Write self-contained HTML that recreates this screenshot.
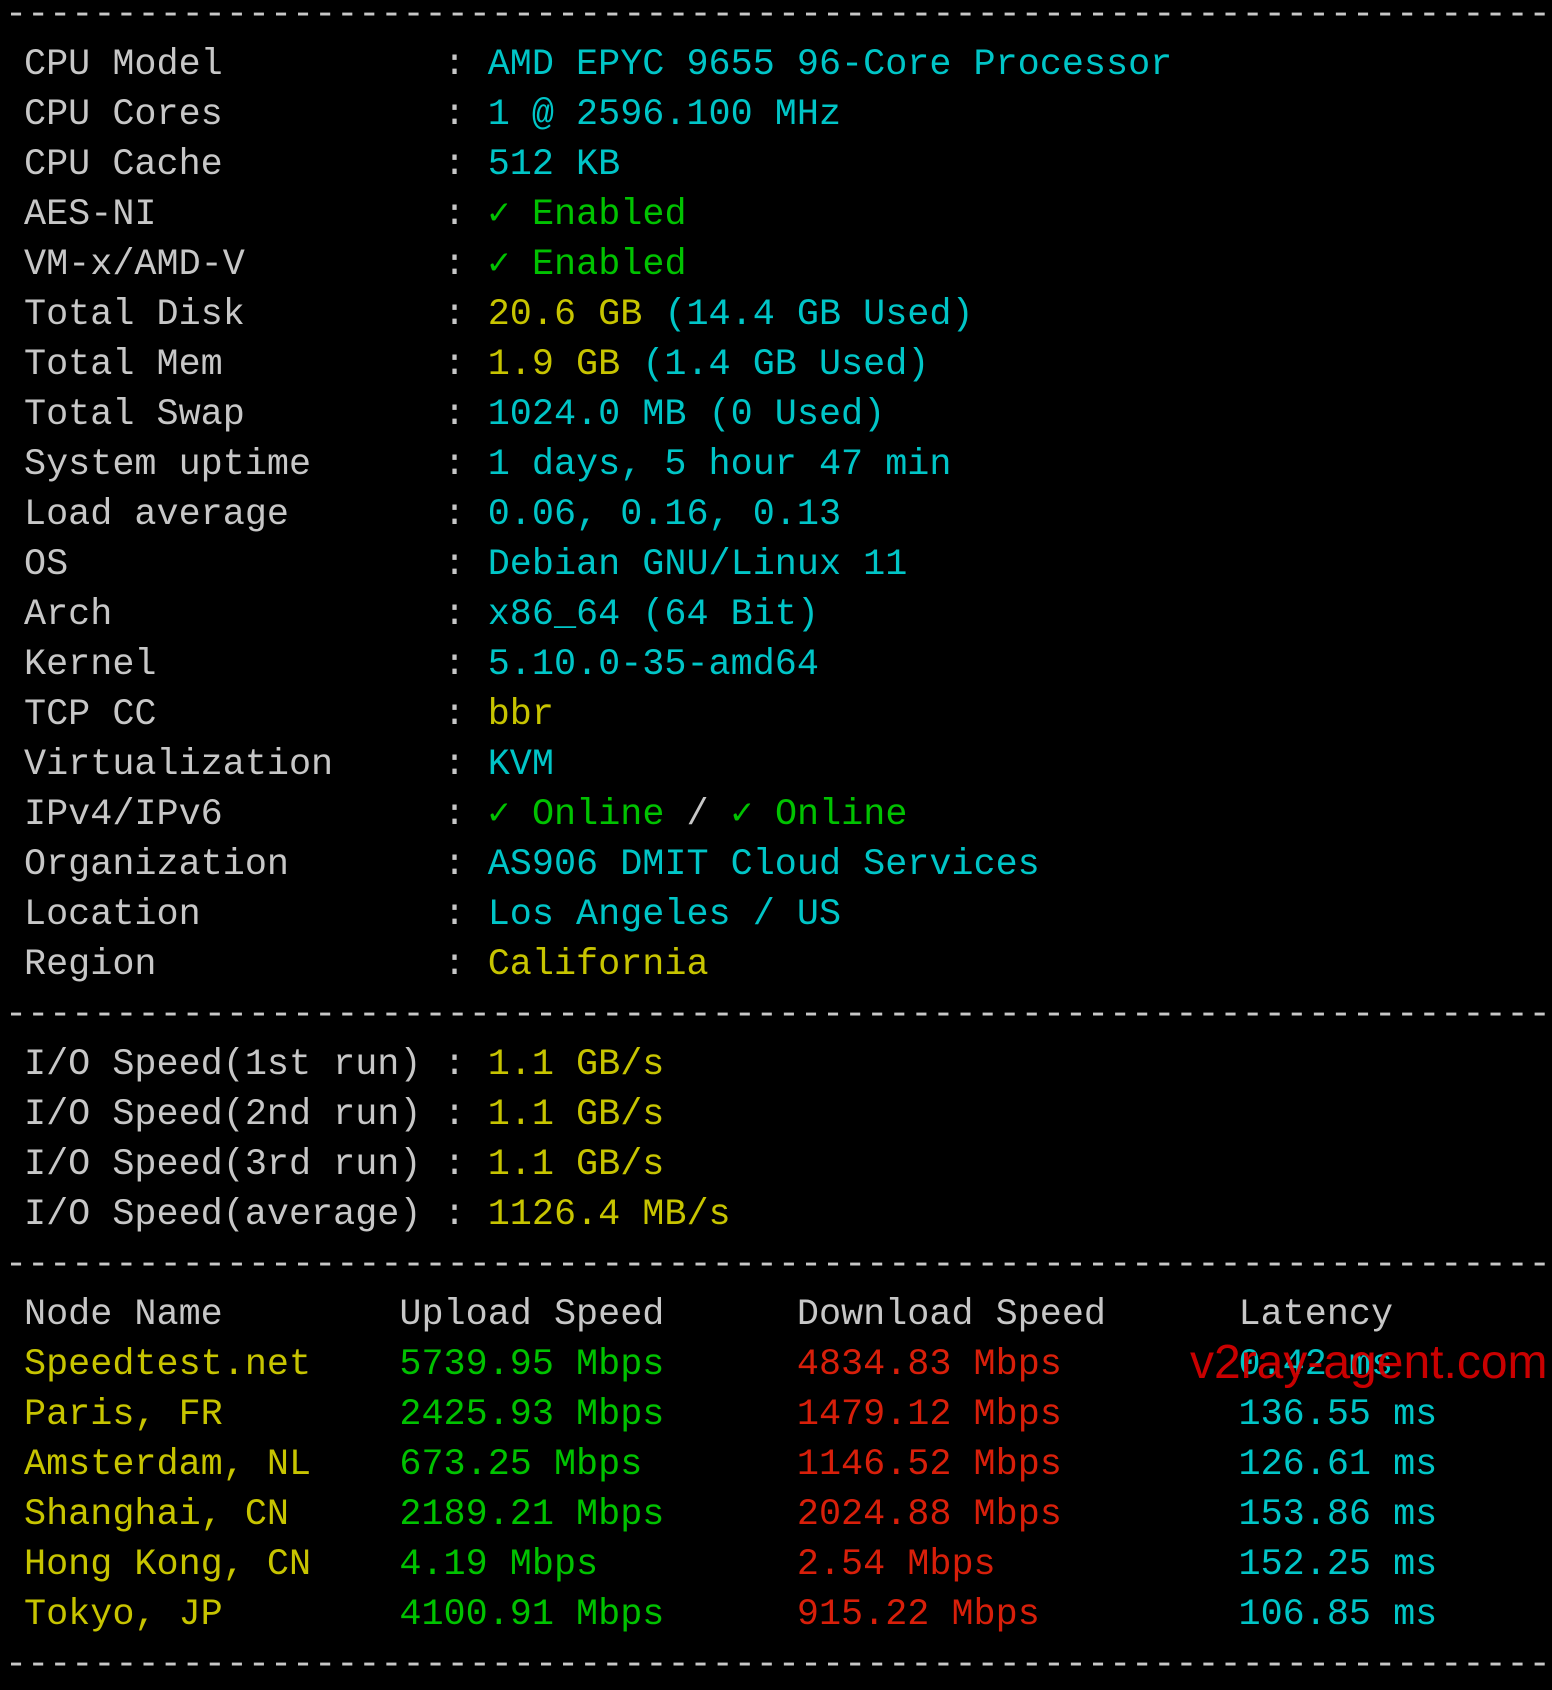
<!DOCTYPE html>
<html><head><meta charset="utf-8"><style>
html,body{margin:0;padding:0;background:#000;width:1552px;height:1680px;overflow:hidden}
pre{position:absolute;left:24px;top:-10px;margin:0;font-family:"Liberation Mono","DejaVu Sans Mono",monospace;font-size:36.8px;line-height:50px;color:#c7c7c7;white-space:pre}
.d{display:inline-block;margin-left:-19px}
.c{color:#00c5c7}.g{color:#00c200}.y{color:#c7c400}.r{color:#d81f0a}
.wm{position:absolute;left:1190px;top:1335px;font-family:"Liberation Sans",Arial,sans-serif;font-size:48px;color:#d40000;line-height:56px;opacity:.95}
</style></head><body>
<pre><span class="d">----------------------------------------------------------------------</span>
CPU Model          : <span class="c">AMD EPYC 9655 96-Core Processor</span>
CPU Cores          : <span class="c">1 @ 2596.100 MHz</span>
CPU Cache          : <span class="c">512 KB</span>
AES-NI             : <span class="g">✓ Enabled</span>
VM-x/AMD-V         : <span class="g">✓ Enabled</span>
Total Disk         : <span class="y">20.6 GB</span> <span class="c">(14.4 GB Used)</span>
Total Mem          : <span class="y">1.9 GB</span> <span class="c">(1.4 GB Used)</span>
Total Swap         : <span class="c">1024.0 MB (0 Used)</span>
System uptime      : <span class="c">1 days, 5 hour 47 min</span>
Load average       : <span class="c">0.06, 0.16, 0.13</span>
OS                 : <span class="c">Debian GNU/Linux 11</span>
Arch               : <span class="c">x86_64 (64 Bit)</span>
Kernel             : <span class="c">5.10.0-35-amd64</span>
TCP CC             : <span class="y">bbr</span>
Virtualization     : <span class="c">KVM</span>
IPv4/IPv6          : <span class="g">✓ Online</span> / <span class="g">✓ Online</span>
Organization       : <span class="c">AS906 DMIT Cloud Services</span>
Location           : <span class="c">Los Angeles / US</span>
Region             : <span class="y">California</span>
<span class="d">----------------------------------------------------------------------</span>
I/O Speed(1st run) : <span class="y">1.1 GB/s</span>
I/O Speed(2nd run) : <span class="y">1.1 GB/s</span>
I/O Speed(3rd run) : <span class="y">1.1 GB/s</span>
I/O Speed(average) : <span class="y">1126.4 MB/s</span>
<span class="d">----------------------------------------------------------------------</span>
Node Name        Upload Speed      Download Speed      Latency
<span class="y">Speedtest.net    </span><span class="g">5739.95 Mbps      </span><span class="r">4834.83 Mbps        </span><span class="c">0.42 ms</span>
<span class="y">Paris, FR        </span><span class="g">2425.93 Mbps      </span><span class="r">1479.12 Mbps        </span><span class="c">136.55 ms</span>
<span class="y">Amsterdam, NL    </span><span class="g">673.25 Mbps       </span><span class="r">1146.52 Mbps        </span><span class="c">126.61 ms</span>
<span class="y">Shanghai, CN     </span><span class="g">2189.21 Mbps      </span><span class="r">2024.88 Mbps        </span><span class="c">153.86 ms</span>
<span class="y">Hong Kong, CN    </span><span class="g">4.19 Mbps         </span><span class="r">2.54 Mbps           </span><span class="c">152.25 ms</span>
<span class="y">Tokyo, JP        </span><span class="g">4100.91 Mbps      </span><span class="r">915.22 Mbps         </span><span class="c">106.85 ms</span>
<span class="d">----------------------------------------------------------------------</span></pre>
<div class="wm">v2ray-agent.com</div>
</body></html>
